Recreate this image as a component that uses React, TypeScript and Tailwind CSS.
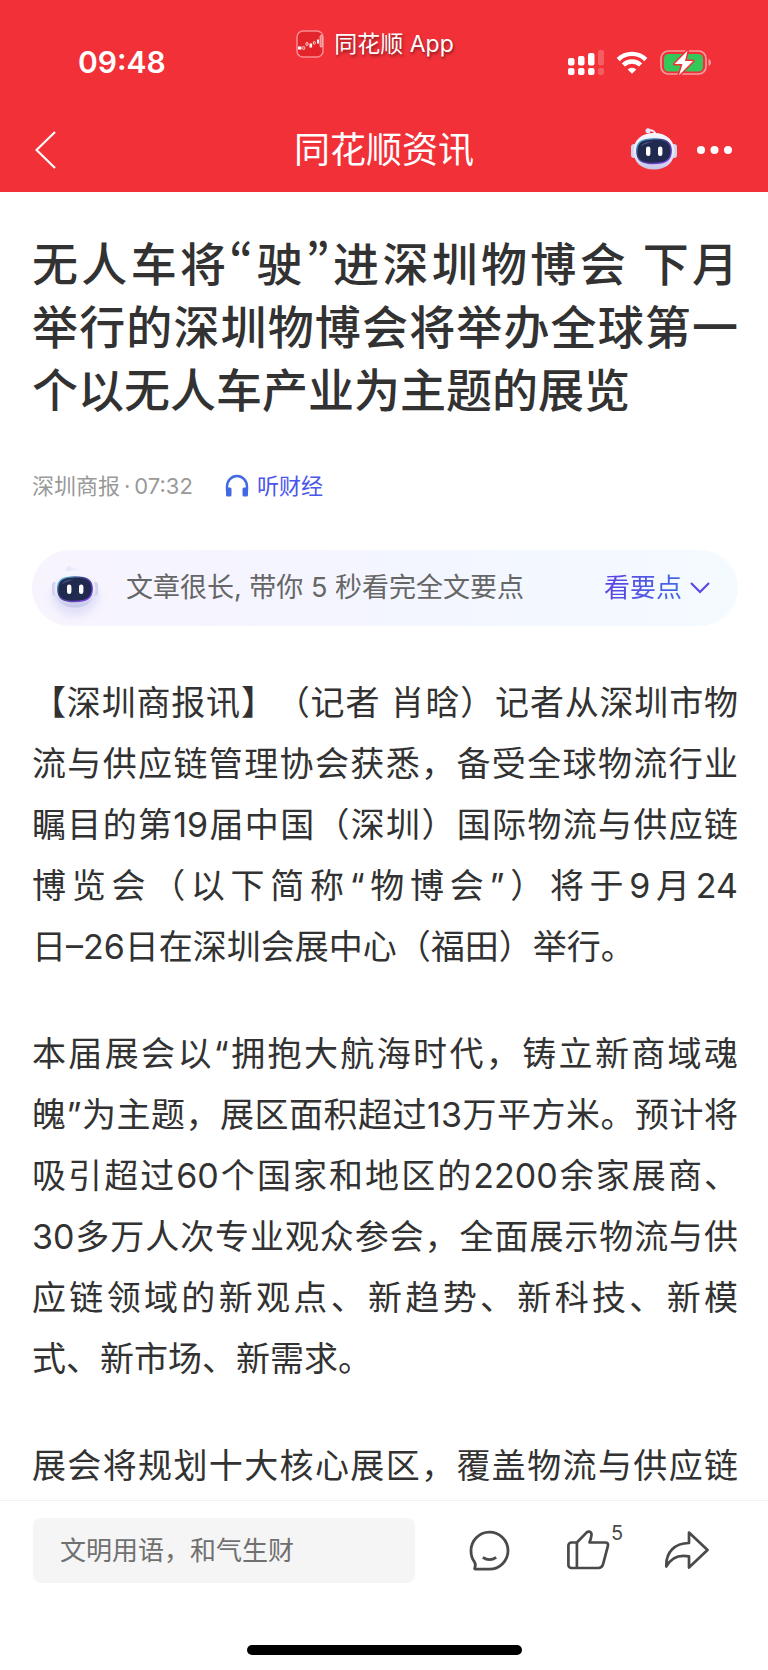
import { useId } from "react";

// \u2060 (word joiner) keeps short words and date ranges on one line
const headline =
  "无人车将“驶”进深圳物博会 下月举\u2060行的深圳物博会将举办全球第一个以无人车产业为主题的展览";

const paragraphs = [
  "【深圳商报讯】（记者 肖晗）记者从深圳市物流与供应链管理协会获悉，备受全球物流行业瞩目的第19届中国（深圳）国际物流与供应链博览会（以下简称“物博会”）将于9月24日–\u206026\u2060日在深圳会展中心（福田）举行。",
  "本届展会以“拥抱大航海时代，铸立新商域魂魄”为主题，展区面积超过13万平方米。预计将吸引超过60个国家和地区的2200余家展商、30多万人次专业观众参会，全面展示物流与供应链领域的新观点、新趋势、新科技、新模式、新市场、新需求。",
];

function AppLogo() {
  return (
    <svg width="28" height="28" viewBox="0 0 28 28" fill="none">
      <rect x="1" y="1" width="26" height="26" rx="6" fill="#e3252b" stroke="#fa8c90" strokeWidth="1.5" />
      <rect x="2" y="16.5" width="3.5" height="3" fill="#fff" />
      <rect x="6.7" y="16.5" width="2" height="3" rx="1" stroke="#fff" strokeWidth=".8" />
      <rect x="10" y="12.5" width="2" height="3" rx="1" stroke="#fff" strokeWidth=".8" />
      <rect x="13.5" y="13.5" width="2.6" height="4" fill="#fff" />
      <rect x="17.3" y="11.5" width="2" height="2.6" rx="1" stroke="#fff" strokeWidth=".8" />
      <rect x="21" y="9.5" width="2" height="4" fill="#fff" />
      <rect x="24.2" y="5.5" width="1.8" height="11.5" rx=".9" stroke="#fff" strokeWidth=".8" />
    </svg>
  );
}

function SignalIcon() {
  return (
    <svg width="36" height="26" viewBox="0 0 36 26" fill="#fff">
      <rect x="0" y="8" width="6.5" height="7.5" rx="2" />
      <rect x="10" y="6" width="6.5" height="9.5" rx="2" />
      <rect x="20" y="3" width="6.5" height="12.5" rx="2" />
      <rect x="30" y="0" width="6" height="15.5" rx="2" opacity=".22" />
      <rect x="0" y="18" width="6.5" height="7" rx="2" />
      <rect x="10" y="18" width="6.5" height="7" rx="2" />
      <rect x="20" y="18" width="6.5" height="7" rx="2" />
      <rect x="30" y="18" width="6" height="7" rx="2" opacity=".22" />
    </svg>
  );
}

function WifiIcon() {
  return (
    <svg width="32" height="24" viewBox="0 0 32 24" fill="none" stroke="#fff" strokeWidth="4.4">
      <path d="M2.2 8.6a19.6 19.6 0 0 1 27.6 0" />
      <path d="M7.4 14a12.2 12.2 0 0 1 17.2 0" />
      <path d="M16 22.8l-4.3-4.4a6.2 6.2 0 0 1 8.6 0z" fill="#fff" stroke="none" />
    </svg>
  );
}

function BatteryIcon() {
  return (
    <svg width="52" height="26" viewBox="0 0 52 26" fill="none">
      <rect x="1" y="1" width="45" height="23" rx="7.5" stroke="#f99a9e" strokeWidth="1.7" />
      <path d="M48.5 9v7c1.6-.6 2.5-2 2.5-3.5s-.9-2.9-2.5-3.5z" fill="#f99a9e" />
      <rect x="4" y="4" width="39" height="17.5" rx="4.5" fill="#34c759" />
      <path
        d="M27.5.8L14.5 14h8L19 25.2 33 11h-8z"
        fill="#fff"
        stroke="#f23038"
        strokeWidth="3"
        paintOrder="stroke"
        strokeLinejoin="round"
      />
    </svg>
  );
}

function Robot({ className }: { className?: string }) {
  const id = useId();
  return (
    <svg width="46" height="44" viewBox="0 0 46 44" fill="none" className={className}>
      <defs>
        <linearGradient id={`${id}head`} x1="0" y1="0" x2="0" y2="1">
          <stop offset="0" stopColor="#f8f8ff" />
          <stop offset=".6" stopColor="#e6e6fa" />
          <stop offset="1" stopColor="#c5c6ea" />
        </linearGradient>
        <linearGradient id={`${id}rim`} x1="0" y1="0" x2="1" y2="1">
          <stop offset="0" stopColor="#52c8e0" />
          <stop offset=".35" stopColor="#3a3f80" />
          <stop offset="1" stopColor="#8a45f0" />
        </linearGradient>
      </defs>
      <path d="M17 2.5c4-.8 7 .5 7.5 4" stroke="#ececff" strokeWidth="1.8" />
      <circle cx="17" cy="2.7" r="2.5" fill="#e6e7fd" />
      <rect x="0" y="16" width="6" height="14" rx="3" fill="#d2d3f2" />
      <rect x="40" y="16" width="6" height="14" rx="3" fill="#d2d3f2" />
      <path
        d="M23 5c12.5 0 20.5 7.5 20.5 18S36 41.5 23 41.5 2.5 34 2.5 23 10.5 5 23 5z"
        fill={`url(#${id}head)`}
      />
      <path
        d="M23 11c12 0 17.2 3 17.2 12S35 35.5 23 35.5 5.8 32.5 5.8 23 11 11 23 11z"
        fill="#202a4f"
        stroke={`url(#${id}rim)`}
        strokeWidth="1.4"
      />
      <path d="M10 18.5c1.5-4 6-5 12-5-4 1-9 2.5-12 5z" fill="#4b5680" />
      <rect x="15" y="18.5" width="4.4" height="9.5" rx="2.2" fill="#fff" />
      <rect x="27" y="18.5" width="4.4" height="9.5" rx="2.2" fill="#fff" />
    </svg>
  );
}

function HeadphonesIcon() {
  return (
    <svg width="24" height="24" viewBox="0 0 24 24" fill="none">
      <path d="M2 17v-4.5a10 10.5 0 0 1 20 0V17" stroke="#4169e1" strokeWidth="2.4" />
      <path d="M1 13.5h4A1.5 1.5 0 0 1 6.5 15v6A1.5 1.5 0 0 1 5 22.5H2.5A1.5 1.5 0 0 1 1 21z" fill="#4169e1" />
      <path d="M23 13.5h-4a1.5 1.5 0 0 0-1.5 1.5v6a1.5 1.5 0 0 0 1.5 1.5h2.5A1.5 1.5 0 0 0 23 21z" fill="#4169e1" />
    </svg>
  );
}

function CommentIcon() {
  return (
    <svg width="44" height="44" viewBox="0 0 44 44" fill="none" stroke="#4a4a4a" strokeWidth="2.8">
      <path
        d="M20.5 40.2H6.5c-.8 0-1.1-.5-.8-1.2.8-2 1-4 0-5.6A19 19 0 0 1 2 22a18.5 18.5 0 1 1 18.5 18.2z"
        strokeLinejoin="round"
      />
      <path d="M13.8 28.3c4.2 2.9 9.2 2.9 13.4 0" />
    </svg>
  );
}

function LikeIcon() {
  return (
    <svg width="44" height="44" viewBox="0 0 44 44" fill="none" stroke="#4a4a4a" strokeWidth="2.7" strokeLinejoin="round">
      <path d="M9.9 13.5H4.4a3 3 0 0 0-3 3V36a3 3 0 0 0 3 3h27c2.6 0 4-1.4 4.7-3.8l4.8-18.3c.5-2.2-.4-3.4-2.5-3.4H22.5c1-2.7 1.8-5.3 2-7.6.2-3.3-2.9-4.3-5-2.3z" />
      <path d="M9.9 13.5V39" />
    </svg>
  );
}

function ShareIcon() {
  return (
    <svg width="44" height="44" viewBox="0 0 44 44" fill="none" stroke="#4a4a4a" strokeWidth="2.7" strokeLinejoin="round">
      <path d="M24 3.5L42.5 21 24 38.5V27.3C14 25.5 6 28.5 1.4 37.5.6 23.5 9.5 14 24 14z" />
    </svg>
  );
}

function StatusBar() {
  return (
    <div className="grid h-[108px] grid-cols-[1fr_auto_1fr] items-start pr-14 pl-[38px]">
      <span className="mt-11 pl-10 text-[30px] leading-9 font-semibold">09:48</span>
      <div className="mt-[30px] flex items-center gap-[10px]">
        <AppLogo />
        <span className="text-[23px] leading-7 [text-shadow:1px_2px_3px_rgba(0,0,0,0.45)]">同花顺 App</span>
      </div>
      <div className="mt-[50px] flex items-center justify-end gap-3">
        <SignalIcon />
        <WifiIcon />
        <BatteryIcon />
      </div>
    </div>
  );
}

function NavBar() {
  return (
    <div className="grid h-[84px] grid-cols-[1fr_auto_1fr] items-center px-[35px]">
      <button type="button" aria-label="返回" className="justify-self-start">
        <svg width="22" height="40" viewBox="0 0 22 40" fill="none" stroke="#fff" strokeWidth="2.2">
          <path d="M20 2L1.5 20 20 38" />
        </svg>
      </button>
      <h2 className="text-4xl leading-[44px]">同花顺资讯</h2>
      <div className="flex items-center gap-5 justify-self-end">
        <button type="button" aria-label="智能助手">
          <Robot />
        </button>
        <button type="button" aria-label="更多">
          <svg width="36" height="12" viewBox="0 0 36 12" fill="#fff">
            <circle cx="4" cy="6" r="4" />
            <circle cx="17.5" cy="6" r="4" />
            <circle cx="31" cy="6" r="4" />
          </svg>
        </button>
      </div>
    </div>
  );
}

function SummaryBanner() {
  return (
    <div className="mt-[47px] flex h-[76px] items-center rounded-full bg-linear-to-r from-[#f8f4fe] via-[#f3f5ff] to-[#f4fbff] pr-7 pl-5">
      <Robot className="drop-shadow-[0_8px_4px_rgba(130,140,220,0.2)]" />
      <p className="ml-7 flex-1 text-[27px] leading-9 text-[#666]">文章很长, 带你 5 秒看完全文要点</p>
      <button type="button" className="flex items-center gap-2">
        <span className="bg-linear-to-r from-[#5b3fe6] to-[#4169e1] bg-clip-text text-[26px] leading-9 text-transparent">
          看要点
        </span>
        <svg width="20" height="14" viewBox="0 0 20 14" fill="none" stroke="#5b46e8" strokeWidth="2.2">
          <path d="M1 2l9 9 9-9" />
        </svg>
      </button>
    </div>
  );
}

function ActionBar() {
  return (
    <footer className="border-t border-[#f2f2f2] bg-white pt-[17px] pb-[15px]">
      <div className="flex items-center gap-[54px] pr-[59px] pl-[33px]">
        <input
          type="text"
          aria-label="发表评论"
          placeholder="文明用语，和气生财"
          className="h-[65px] min-w-0 flex-1 rounded-lg bg-[#f5f5f5] px-[27px] text-[26px] placeholder:text-[#707070]"
        />
        <button type="button" aria-label="评论">
          <CommentIcon />
        </button>
        <button type="button" aria-label="点赞" className="relative">
          <LikeIcon />
          <span className="absolute -top-2 left-11 text-xl leading-6 text-[#4a4a4a]">5</span>
        </button>
        <button type="button" aria-label="分享">
          <ShareIcon />
        </button>
      </div>
      <div className="mx-auto mt-[62px] h-[10px] w-[275px] rounded-full bg-black" />
    </footer>
  );
}

export default function App() {
  return (
    <div
      lang="zh-CN"
      className="bg-white font-['Inter','Noto_Sans_CJK_SC',sans-serif] text-[#323232] [text-spacing-trim:space-all]"
    >
      <header className="bg-[#f23038] text-white">
        <StatusBar />
        <NavBar />
      </header>

      <main className="pt-[38px] pr-[30px] pb-1 pl-8">
        <h1 className="text-justify font-['Noto_Sans_CJK_SC',sans-serif] text-[46px] leading-[63px] font-medium [font-feature-settings:'pwid']">
          {headline}
        </h1>

        <div className="mt-[50px] flex h-[34px] items-center text-[22px] leading-[34px] text-[#999]">
          <span>深圳商报</span>
          <span className="px-1">·</span>
          <time>07:32</time>
          <button type="button" className="ml-8 flex items-center gap-2 text-[#4a55ea]">
            <HeadphonesIcon />
            听财经
          </button>
        </div>

        <SummaryBanner />

        <article className="mt-[46px] flex flex-col gap-[46px] text-justify text-[34px] leading-[61px]">
          {paragraphs.map((text) => (
            <p key={text}>{text}</p>
          ))}
          <p className="[text-align-last:justify]">展会将规划十大核心展区，覆盖物流与供应链</p>
        </article>
      </main>

      <ActionBar />
    </div>
  );
}
